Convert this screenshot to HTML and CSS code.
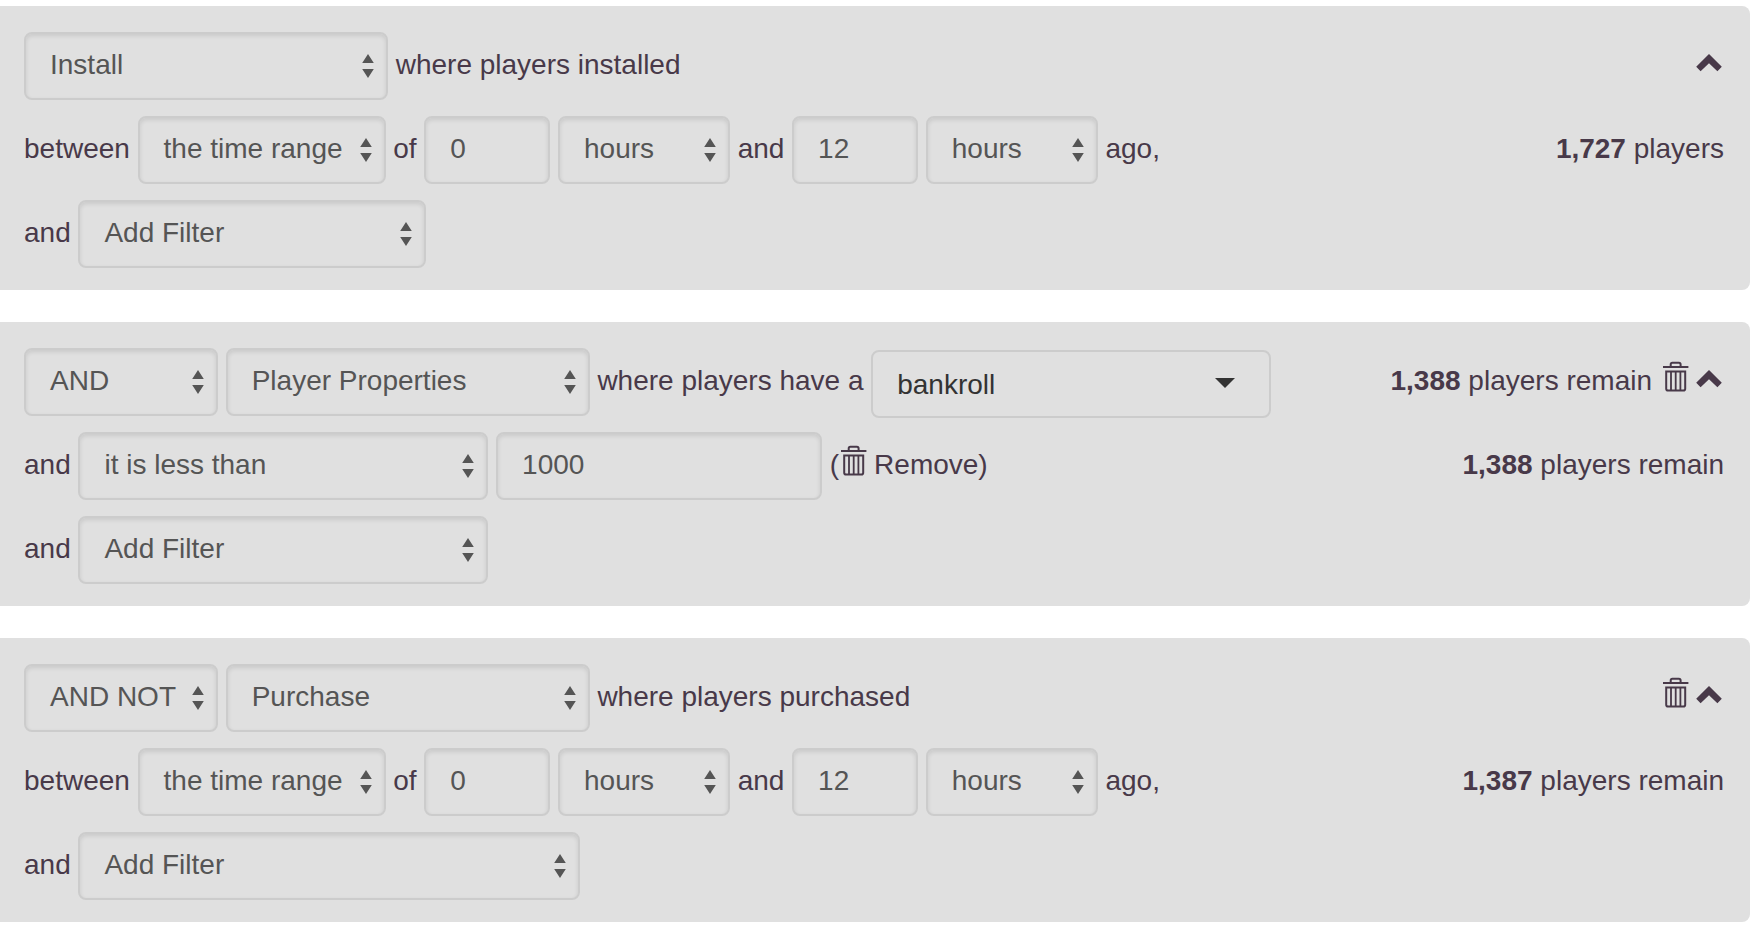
FILE: index.html
```
<!DOCTYPE html>
<html lang="en">
<head>
<meta charset="utf-8">
<title>Player segments</title>
<link rel="stylesheet" href="styles.css">
</head>
<body>
<svg class="defs" width="0" height="0" aria-hidden="true">
  <symbol id="sort" viewBox="0 0 12 24"><path d="M6 0L11.8 9H0.2zM6 24L11.8 15H0.2z" fill="currentColor"/></symbol>
  <symbol id="chevron" viewBox="0 0 26 18"><path d="M13 0L25.8 12.8L21.4 17.2L13 9.2L4.6 17.2L0.2 12.8z" fill="currentColor"/></symbol>
  <symbol id="trash" viewBox="0 0 26 31"><g fill="none" stroke="currentColor" stroke-width="2"><path d="M0 6H25.4"/><path d="M7.7 6V3.4Q7.7 1.7 9.4 1.7H15.9Q17.6 1.7 17.6 3.4V6"/><path d="M3.2 10.6H22.2V27.8Q22.2 29.6 20.4 29.6H5Q3.2 29.6 3.2 27.8z"/><path d="M8 10V29M12.7 10V29M17.4 10V29" stroke-width="1.8"/></g></symbol>
</svg>
<main class="segments">
  <section class="panel">
    <div class="row">
      <div class="field select w-event">Install<svg class="sort"><use href="#sort"/></svg></div>
      <span class="label">where players installed</span>
      <div class="aside"><svg class="chevron"><use href="#chevron"/></svg></div>
    </div>
    <div class="row">
      <span class="label">between</span>
      <div class="field select w-range">the time range<svg class="sort"><use href="#sort"/></svg></div>
      <span class="label">of</span>
      <div class="field w-number">0</div>
      <div class="field select w-unit">hours<svg class="sort"><use href="#sort"/></svg></div>
      <span class="label">and</span>
      <div class="field w-number">12</div>
      <div class="field select w-unit">hours<svg class="sort"><use href="#sort"/></svg></div>
      <span class="label">ago,</span>
      <div class="aside"><span class="label"><b>1,727</b> players</span></div>
    </div>
    <div class="row">
      <span class="label">and</span>
      <div class="field select w-filter-s">Add Filter<svg class="sort"><use href="#sort"/></svg></div>
    </div>
  </section>

  <section class="panel">
    <div class="row">
      <div class="field select w-op">AND<svg class="sort"><use href="#sort"/></svg></div>
      <div class="field select w-event">Player Properties<svg class="sort"><use href="#sort"/></svg></div>
      <span class="label">where players have a</span>
      <div class="field combo">bankroll<span class="caret"></span></div>
      <div class="aside"><span class="label"><b>1,388</b> players remain</span><svg class="trash"><use href="#trash"/></svg><svg class="chevron"><use href="#chevron"/></svg></div>
    </div>
    <div class="row">
      <span class="label">and</span>
      <div class="field select w-filter-m">it is less than<svg class="sort"><use href="#sort"/></svg></div>
      <div class="field w-value">1000</div>
      <div class="remove"><span class="label">(</span><svg class="trash"><use href="#trash"/></svg><span class="label">Remove)</span></div>
      <div class="aside"><span class="label"><b>1,388</b> players remain</span></div>
    </div>
    <div class="row">
      <span class="label">and</span>
      <div class="field select w-filter-m">Add Filter<svg class="sort"><use href="#sort"/></svg></div>
    </div>
  </section>

  <section class="panel">
    <div class="row">
      <div class="field select w-op">AND NOT<svg class="sort"><use href="#sort"/></svg></div>
      <div class="field select w-event">Purchase<svg class="sort"><use href="#sort"/></svg></div>
      <span class="label">where players purchased</span>
      <div class="aside"><svg class="trash"><use href="#trash"/></svg><svg class="chevron"><use href="#chevron"/></svg></div>
    </div>
    <div class="row">
      <span class="label">between</span>
      <div class="field select w-range">the time range<svg class="sort"><use href="#sort"/></svg></div>
      <span class="label">of</span>
      <div class="field w-number">0</div>
      <div class="field select w-unit">hours<svg class="sort"><use href="#sort"/></svg></div>
      <span class="label">and</span>
      <div class="field w-number">12</div>
      <div class="field select w-unit">hours<svg class="sort"><use href="#sort"/></svg></div>
      <span class="label">ago,</span>
      <div class="aside"><span class="label"><b>1,387</b> players remain</span></div>
    </div>
    <div class="row">
      <span class="label">and</span>
      <div class="field select w-filter-l">Add Filter<svg class="sort"><use href="#sort"/></svg></div>
    </div>
  </section>
</main>
</body>
</html>
```
FILE: styles.css
```
* { box-sizing: border-box; }
body {
  margin: 0;
  background: #fff;
  color: #483949;
  font: 28px/32px "Liberation Sans", Arial, sans-serif;
  overflow: hidden;
}
.defs { display: none; }
svg { display: block; flex: none; }
.segments {
  display: flex;
  flex-direction: column;
  gap: 32px;
  padding-top: 6px;
}
.panel {
  display: flex;
  flex-direction: column;
  gap: 16px;
  height: 284px;
  padding: 26px 26px 22px 24px;
  background: #e0e0e0;
  border-radius: 0 8px 8px 0;
}
.row {
  display: flex;
  align-items: flex-start;
  gap: 7.7px;
  height: 68px;
}
.label {
  padding-top: 17px;
  white-space: pre;
}
.field {
  display: flex;
  align-items: flex-start;
  justify-content: space-between;
  flex: none;
  height: 68px;
  padding: 15px 24px 0;
  border: 2px solid #ccc;
  border-radius: 8px;
  box-shadow: inset 0 2px 4px rgba(0, 0, 0, 0.1);
  color: #555;
  white-space: nowrap;
}
.select { padding-right: 12px; }
.sort { width: 12px; height: 24px; margin-top: 5px; }
.w-event { width: 364px; }
.w-range { width: 248px; }
.w-number { width: 126px; }
.w-unit { width: 172px; }
.w-op { width: 194px; }
.w-value { width: 326px; }
.w-filter-s { width: 348px; }
.w-filter-m { width: 410px; }
.w-filter-l { width: 502px; }
.combo {
  width: 400px;
  margin-top: 2px;
  padding: 17px 34px 0 24px;
  box-shadow: none;
  color: #333;
}
.caret {
  margin-top: 9px;
  border: 10px solid transparent;
  border-top-color: #333;
  border-bottom: 0;
}
.aside {
  display: flex;
  margin-left: auto;
}
.chevron { width: 26px; height: 18px; margin: 22px 2px 0 0; }
.aside .trash { margin: 13px 7px 0 11px; }
.trash { width: 26px; height: 31px; }
.remove { display: flex; }
.remove .trash { margin: 13px 7px 0 2px; }
```
